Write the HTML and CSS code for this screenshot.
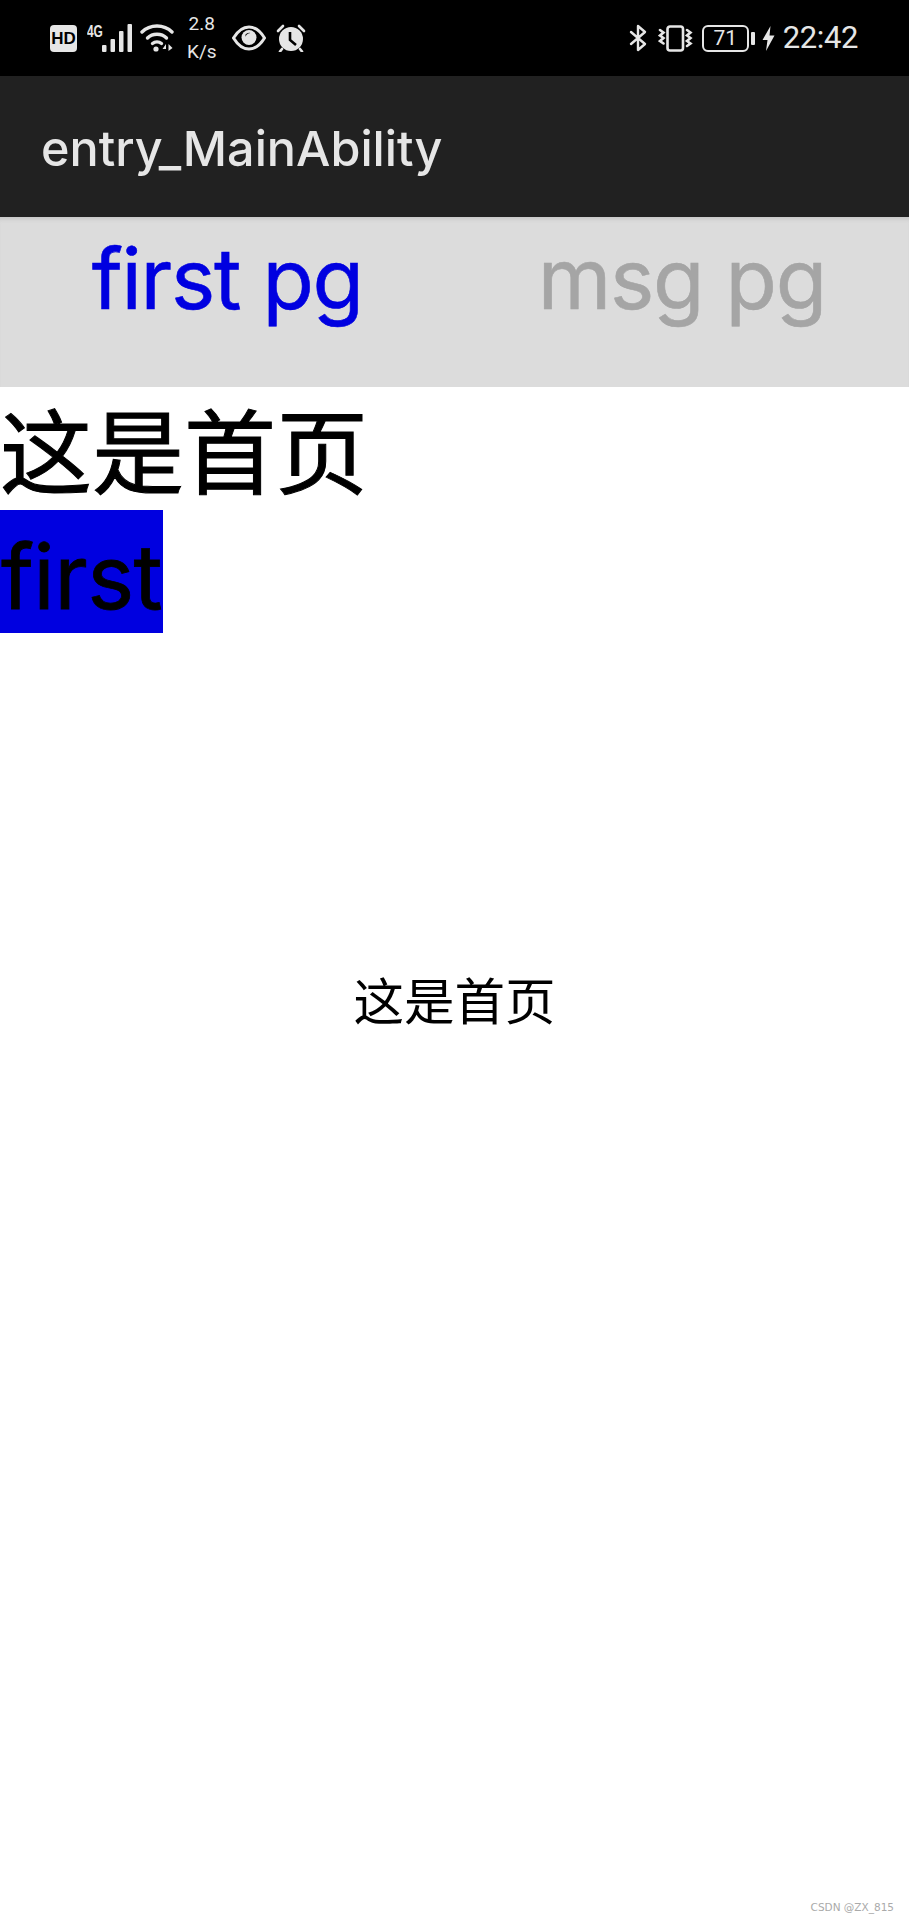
FILE: index.html
```html
<!DOCTYPE html>
<html lang="zh-CN">
<head>
    <meta charset="UTF-8">
    <meta name="viewport" content="width=device-width, initial-scale=1.0">
    <title>entry_MainAbility</title>
    <link rel="stylesheet" href="styles.css">
</head>
<body>
    <div class="status-bar">
        <div class="status-left">
            <div class="hd-badge">HD</div>
            <div class="signal">
                <span class="net-label">4G</span>
                <svg class="signal-bars" width="30" height="28" viewBox="0 0 30 28" fill="#e6e6e6">
                    <rect x="0" y="21" width="4.5" height="7" rx="1"/>
                    <rect x="8.5" y="15" width="4.5" height="13" rx="1"/>
                    <rect x="17" y="7" width="4.5" height="21" rx="1"/>
                    <rect x="25.5" y="0" width="4.5" height="28" rx="1"/>
                </svg>
            </div>
            <svg class="wifi" width="34" height="30" viewBox="0 0 34 30" fill="none" stroke="#e6e6e6" stroke-width="3.4" stroke-linecap="round">
                <path d="M2 9 C10 1 24 1 32 9"/>
                <path d="M7.5 15 C12.5 10 21.5 10 26.5 15"/>
                <path d="M12.5 20.5 C15 18.5 19 18.5 21.5 20.5"/>
                <circle cx="16" cy="26" r="2.6" fill="#e6e6e6" stroke="none"/>
                <path d="M26 21 L22.5 26 H26 Z M28.5 21 V28 L32.5 25 Z" fill="#e6e6e6" stroke="none"/>
            </svg>
            <div class="speed">
                <span>2.8</span>
                <span>K/s</span>
            </div>
            <svg class="eye" width="34" height="26" viewBox="0 0 34 26" fill="none">
                <path d="M1.5 13 C7 4 12 2 17 2 C22 2 27 4 32.5 13 C27 22 22 24 17 24 C12 24 7 22 1.5 13 Z" stroke="#e6e6e6" stroke-width="3"/>
                <circle cx="17" cy="12.5" r="7.5" fill="#e6e6e6"/>
                <path d="M13.5 9.5 a5 5 0 0 1 5 -1.5 a5 5 0 0 0 -5 6 Z" fill="#000"/>
            </svg>
            <svg class="alarm" width="30" height="28" viewBox="0 0 30 28" fill="#e6e6e6">
                <circle cx="15" cy="15" r="12"/>
                <path d="M2 7 L7 2" stroke="#e6e6e6" stroke-width="2.6" stroke-linecap="round"/>
                <path d="M28 7 L23 2" stroke="#e6e6e6" stroke-width="2.6" stroke-linecap="round"/>
                <path d="M6 25 L4 27.5 M24 25 L26 27.5" stroke="#e6e6e6" stroke-width="2.6" stroke-linecap="round"/>
                <path d="M14 8 V16 L20 21" fill="none" stroke="#000" stroke-width="2.6"/>
            </svg>
        </div>
        <div class="status-right">
            <svg class="bluetooth" width="18" height="28" viewBox="0 0 18 28" fill="none" stroke="#e6e6e6" stroke-width="2.4" stroke-linejoin="round" stroke-linecap="round">
                <path d="M2 8 L16 20 L9 26 V2 L16 8 L2 20"/>
            </svg>
            <svg class="vibrate" width="35" height="27" viewBox="0 0 35 27" fill="none" stroke="#e6e6e6" stroke-width="2.6" stroke-linecap="round">
                <rect x="9.5" y="1.5" width="15.5" height="24" rx="2.5"/>
                <path d="M2 5 L5.5 7.5 L2 10.5 L5.5 13 L2 16 L5.5 18.5"/>
                <path d="M29 5 L32.5 7.5 L29 10.5 L32.5 13 L29 16 L32.5 18.5 L29 21"/>
            </svg>
            <div class="battery">
                <div class="battery-body">71</div>
                <div class="battery-cap"></div>
            </div>
            <svg class="bolt" width="13" height="25" viewBox="0 0 13 25" fill="#e6e6e6">
                <path d="M8.5 0 L0.5 14 H5.5 L4 25 L12.5 9.5 H7.5 Z"/>
            </svg>
            <div class="clock">22:42</div>
        </div>
    </div>

    <div class="app-bar">entry_MainAbility</div>

    <div class="tabs">
        <div class="tab tab-active">first pg</div>
        <div class="tab">msg pg</div>
    </div>

    <div class="page">
        <div class="page-title">这是首页</div>
        <div class="first-box">first</div>
        <div class="page-center">这是首页</div>
    </div>

    <div class="watermark">CSDN @ZX_815</div>
</body>
</html>
```

FILE: styles.css
```css
* {
    margin: 0;
    padding: 0;
    box-sizing: border-box;
}

body {
    font-family: Inter, "Noto Sans CJK SC", sans-serif;
    background: #fff;
    color: #000;
    width: 909px;
    height: 1920px;
    overflow: hidden;
    position: relative;
}

.status-bar {
    height: 76px;
    background: #000;
    color: #e6e6e6;
    display: flex;
    justify-content: space-between;
    align-items: center;
    padding: 0 51px 0 50px;
}

.status-left,
.status-right {
    display: flex;
    align-items: center;
}

.hd-badge {
    width: 27px;
    height: 27px;
    background: #e6e6e6;
    color: #000;
    border-radius: 4px;
    font: 700 17px "Liberation Sans", sans-serif;
    line-height: 27px;
    text-align: center;
    margin-right: 10px;
}

.signal {
    display: flex;
    align-items: flex-start;
    width: 45px;
    margin-right: 8px;
}

.net-label {
    font: 700 17px "Liberation Sans", sans-serif;
    line-height: 15px;
    transform: scaleX(0.7);
    transform-origin: left;
    width: 15px;
}

.speed {
    display: flex;
    flex-direction: column;
    align-items: center;
    font-size: 19px;
    line-height: 28px;
    margin: 0 15px 0 13px;
    font-family: Roboto, sans-serif;
}

.eye {
    margin-right: 10px;
}

.bluetooth {
    margin-right: 11px;
}

.vibrate {
    margin-right: 9px;
}

.battery {
    display: flex;
    align-items: center;
    gap: 2px;
    margin-right: 7px;
}

.battery-body {
    width: 47px;
    height: 27px;
    border: 2px solid #e6e6e6;
    border-radius: 6px;
    font: 400 21px Roboto, sans-serif;
    line-height: 23px;
    text-align: center;
}

.battery-cap {
    width: 4px;
    height: 13px;
    background: #e6e6e6;
    border-radius: 1px;
}

.bolt {
    margin-right: 8px;
}

.clock {
    font: 400 31px Roboto, sans-serif;
    letter-spacing: -0.4px;
    line-height: 36px;
}

.app-bar {
    height: 141px;
    background: #212121;
    color: #e6e6e6;
    font-size: 48.5px;
    font-weight: 500;
    line-height: 146px;
    padding-left: 41px;
}

.tabs {
    height: 170px;
    background: #dcdcdc;
    display: flex;
    box-shadow: inset 0 5px 4px -3px #c4c4c4;
}

.tab {
    flex: 1;
    text-align: center;
    font-size: 84px;
    letter-spacing: -1.3px;
    line-height: 124px;
    color: #a5a5a5;
    -webkit-text-stroke: 0.6px;
}

.tab-active {
    color: #0000e0;
}

.page {
    display: flex;
    flex-direction: column;
    align-items: flex-start;
}

.page-title {
    font-size: 92px;
    height: 123px;
    line-height: 133px;
    -webkit-text-stroke: 1px;
}

.first-box {
    width: 163px;
    height: 123px;
    background: #0000e0;
    font-size: 89px;
    letter-spacing: -0.6px;
    line-height: 134px;
    padding-left: 1px;
    white-space: nowrap;
    -webkit-text-stroke: 0.8px;
}

.page-center {
    align-self: center;
    font-size: 50.5px;
    line-height: 70px;
    margin-top: 334px;
}

.watermark {
    position: absolute;
    right: 15px;
    bottom: 7px;
    font: 10.5px "DejaVu Sans", sans-serif;
    color: #aaa;
}
```
